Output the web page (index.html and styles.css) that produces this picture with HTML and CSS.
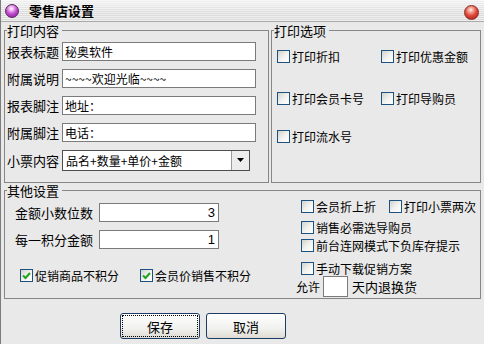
FILE: index.html
```html
<!DOCTYPE html>
<html lang="zh">

<head>
    <meta charset="UTF-8">
    <title>零售店设置</title>
    <link rel="stylesheet" href="styles.css">
</head>

<body>
    <div class="window">
        <div class="titlebar">
            <span class="orb orb-app"></span>
            <span class="title">零售店设置</span>
            <span class="orb orb-close"></span>
        </div>

        <div class="body">
            <div class="top-row">
                <fieldset class="group print-content">
                    <legend>打印内容</legend>
                    <div class="fields">
                        <div class="field"><span class="field-label">报表标题</span><input class="text" type="text" value="秘奥软件"></div>
                        <div class="field"><span class="field-label">附属说明</span><input class="text" type="text" value="~~~~欢迎光临~~~~"></div>
                        <div class="field"><span class="field-label">报表脚注</span><input class="text" type="text" value="地址："></div>
                        <div class="field"><span class="field-label">附属脚注</span><input class="text" type="text" value="电话："></div>
                        <div class="field field-combo">
                            <span class="field-label">小票内容</span>
                            <div class="combo">
                                <span class="combo-text">品名+数量+单价+金额</span>
                                <span class="combo-btn"><svg width="9" height="5" viewBox="0 0 9 5"><path d="M1 0h7L4.5 4z" fill="#000"/></svg></span>
                            </div>
                        </div>
                    </div>
                </fieldset>

                <fieldset class="group print-options">
                    <legend>打印选项</legend>
                    <div class="opt-grid">
                        <div class="check"><span class="box"></span>打印折扣</div>
                        <div class="check"><span class="box"></span>打印优惠金额</div>
                        <div class="check"><span class="box"></span>打印会员卡号</div>
                        <div class="check"><span class="box"></span>打印导购员</div>
                        <div class="check"><span class="box"></span>打印流水号</div>
                    </div>
                </fieldset>
            </div>

            <fieldset class="group other">
                <legend>其他设置</legend>
                <div class="other-grid">
                    <div class="other-left">
                        <div class="field num-field"><span class="num-label">金额小数位数</span><input class="text num" type="text" value="3"></div>
                        <div class="field num-field"><span class="num-label">每一积分金额</span><input class="text num" type="text" value="1"></div>
                        <div class="check-row">
                            <div class="check wide"><span class="box checked"><svg width="11" height="11" viewBox="0 0 11 11"><path d="M2 5.5l2.5 2.5 4.5-5" fill="none" stroke="#21a121" stroke-width="2"/></svg></span>促销商品不积分</div>
                            <div class="check"><span class="box checked"><svg width="11" height="11" viewBox="0 0 11 11"><path d="M2 5.5l2.5 2.5 4.5-5" fill="none" stroke="#21a121" stroke-width="2"/></svg></span>会员价销售不积分</div>
                        </div>
                    </div>
                    <div class="other-right">
                        <div class="check-row indent">
                            <div class="check narrow"><span class="box"></span>会员折上折</div>
                            <div class="check"><span class="box"></span>打印小票两次</div>
                        </div>
                        <div class="check indent"><span class="box"></span>销售必需选导购员</div>
                        <div class="check indent"><span class="box"></span>前台连网模式下负库存提示</div>
                        <div class="check indent"><span class="box"></span>手动下载促销方案</div>
                        <div class="days">
                            <span>允许</span>
                            <input class="text days-input" type="text" value="">
                            <span>天内退换货</span>
                        </div>
                    </div>
                </div>
            </fieldset>

            <div class="buttons">
                <button class="btn btn-default">保存</button>
                <button class="btn">取消</button>
            </div>
        </div>
    </div>
</body>

</html>
```

FILE: styles.css
```css
* {
    box-sizing: border-box;
}

body {
    margin: 0;
    font-family: "Noto Sans CJK SC", "Liberation Sans", sans-serif;
    color: #000;
    background: #e9e9e9;
}

.window {
    width: 484px;
    height: 344px;
    background: #e9e9e9;
    border-left: 1px solid #7c7c7c;
    display: flex;
    flex-direction: column;
}

/* 标题栏 */
.titlebar {
    height: 22px;
    flex: none;
    display: flex;
    align-items: center;
    padding: 0 5px 0 4px;
    border-bottom: 1px solid #a9a9a9;
    background:
        linear-gradient(to bottom, rgba(255, 255, 255, 0.6), rgba(255, 255, 255, 0) 60%),
        repeating-linear-gradient(to bottom, #efefef 0, #efefef 1px, #dcdcdc 1px, #dcdcdc 2px);
}

.title {
    font-size: 13px;
    font-weight: bold;
    line-height: 16px;
}

.orb {
    display: inline-block;
    border-radius: 50%;
    flex: none;
}

.orb-app {
    width: 14px;
    height: 14px;
    margin-right: 10px;
    border: 1px solid #5a2a60;
    background: radial-gradient(circle at 45% 30%, #ffffff 0, #f6c8f6 15%, #c34bd1 50%, #7a168a 100%);
}

.orb-close {
    width: 15px;
    height: 15px;
    margin-left: auto;
    margin-top: 3px;
    border: 1px solid #8a2a22;
    background: radial-gradient(circle at 45% 30%, #ffffff 0, #f7b7a8 15%, #e0483a 50%, #a01a12 100%);
}

.body {
    flex: 1;
    padding: 1px 3px 0 3px;
}

/* 分组框 */
.group {
    margin: 0;
    padding: 0;
    min-width: 0;
    border: 1px solid #868686;
}

.group legend {
    margin-left: 2px;
    padding: 0 3px 0 0;
    font-size: 13px;
    line-height: 15px;
}

.top-row {
    display: flex;
    gap: 2px;
    height: 160px;
}

.print-content {
    width: 265px;
    flex: none;
}

.print-options {
    flex: 1;
}

.fields {
    padding: 4px 0 0 2px;
}

.field {
    display: flex;
    align-items: center;
    height: 19px;
    margin-bottom: 8px;
}

.field-label {
    width: 55px;
    font-size: 13px;
    line-height: 19px;
}

.text {
    height: 19px;
    margin: 0;
    padding: 0 2px;
    border: 1px solid #7b7b7b;
    background: #fff;
    font-family: "Noto Sans CJK SC", "Liberation Sans", sans-serif;
    font-size: 12px;
    color: #000;
    outline: none;
}

.fields .text {
    width: 194px;
}

.field-combo {
    height: 21px;
}

.combo {
    width: 188px;
    height: 21px;
    display: flex;
    border: 1px solid #4e4e4e;
    background: #fff;
}

.combo-text {
    flex: 1;
    padding-left: 3px;
    font-size: 12px;
    line-height: 19px;
}

.combo-btn {
    width: 18px;
    display: flex;
    align-items: center;
    justify-content: center;
    border-left: 1px solid #9a9a9a;
    background: #ececec;
}

/* 复选框 */
.opt-grid {
    display: grid;
    grid-template-columns: 104px auto;
    grid-template-rows: 42px 38px 15px;
    align-items: start;
    padding: 11px 0 0 5px;
}

.check {
    display: flex;
    align-items: center;
    height: 15px;
    font-size: 12px;
    line-height: 15px;
    white-space: nowrap;
}

.box {
    width: 13px;
    height: 13px;
    flex: none;
    margin-right: 2px;
    display: flex;
    align-items: center;
    justify-content: center;
    border: 1px solid #1c5180;
    background: linear-gradient(135deg, #d2d2cc 0, #f3f3f1 55%, #ffffff 100%);
}

/* 其他设置 */
.other {
    height: 116px;
}

.other-grid {
    display: grid;
    grid-template-columns: 291px 1fr;
}

.other-left {
    padding: 5px 0 0 10px;
}

.num-label {
    width: 84px;
    font-size: 13px;
    line-height: 19px;
}

.num {
    width: 120px;
    text-align: right;
    padding-right: 3px;
    font-family: "Liberation Sans", sans-serif;
    font-size: 13px;
}

.check-row {
    display: flex;
    margin-top: 19px;
}

.other-left .check-row {
    padding-left: 5px;
}

.check.wide {
    width: 120px;
}

.other-right {
    display: grid;
    grid-template-rows: 21px 18px 23px 15px 21px;
    padding-top: 1px;
}

.other-right .check-row {
    margin-top: 0;
}

.indent {
    padding-left: 5px;
}

.check.narrow {
    width: 88px;
}

.days {
    display: flex;
    align-items: center;
    height: 21px;
    font-size: 12px;
}

.days-input {
    width: 25px;
    height: 21px;
    margin: 0 4px 0 3px;
}

.days span:last-child {
    font-size: 13px;
}

/* 按钮 */
.buttons {
    display: flex;
    gap: 6px;
    padding: 14px 0 0 116px;
}

.btn {
    width: 80px;
    height: 26px;
    padding: 0;
    border: 1px solid #1d3c64;
    border-radius: 3px;
    background: linear-gradient(to bottom, #ffffff 0, #f1f1ee 60%, #dedbd2 100%);
    font-family: "Noto Sans CJK SC", "Liberation Sans", sans-serif;
    font-size: 13px;
    color: #000;
}

.btn-default {
    outline: 1px dotted #000;
    outline-offset: -3px;
}
```
